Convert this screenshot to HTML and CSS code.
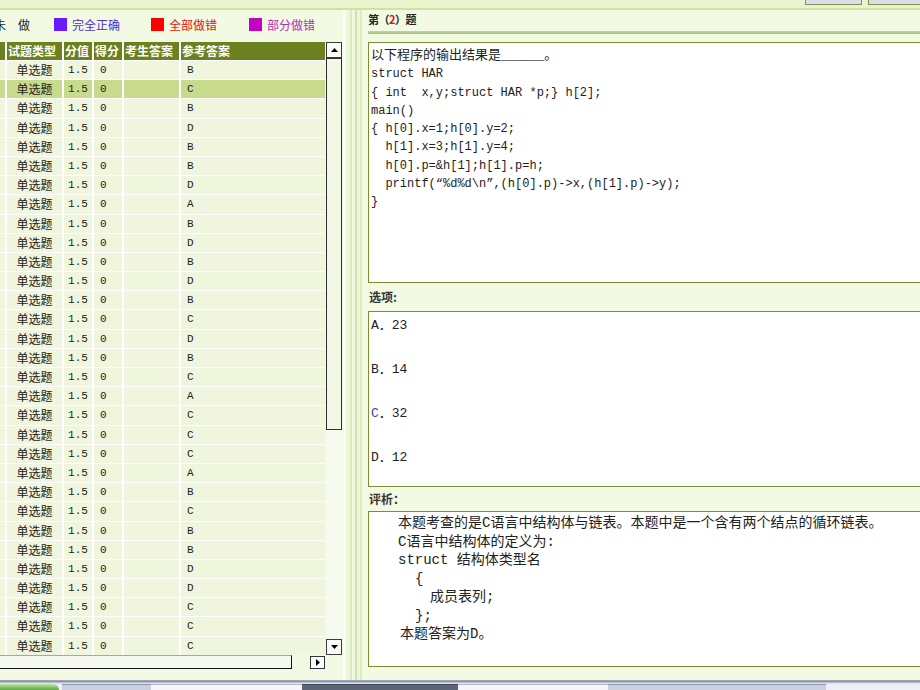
FILE: index.html
```html
<!DOCTYPE html>
<html lang="zh-CN">
<head>
<meta charset="utf-8">
<title>试题</title>
<link rel="stylesheet" href="styles.css">
</head>
<body>
<div class="top">
  <span class="tbtn tbtn-a"></span>
  <span class="tbtn tbtn-b"></span>
</div>
<div class="main">
  <section class="left">
    <div class="legend">
      <span class="undone">未做</span>
      <span class="li li-blue"><i class="sw"></i>完全正确</span>
      <span class="li li-red"><i class="sw"></i>全部做错</span>
      <span class="li li-purple"><i class="sw"></i>部分做错</span>
    </div>
    <div class="grid-wrap">
      <div class="table">
        <div class="row head"><span></span><span>试题类型</span><span>分值</span><span>得分</span><span>考生答案</span><span>参考答案</span></div>
        <div class="row"><span></span><span class="c-type">单选题</span><span class="c-num">1.5</span><span class="c-got">0</span><span></span><span class="c-ref">B</span></div>
        <div class="row sel"><span></span><span class="c-type">单选题</span><span class="c-num">1.5</span><span class="c-got">0</span><span></span><span class="c-ref">C</span></div>
        <div class="row"><span></span><span class="c-type">单选题</span><span class="c-num">1.5</span><span class="c-got">0</span><span></span><span class="c-ref">B</span></div>
        <div class="row"><span></span><span class="c-type">单选题</span><span class="c-num">1.5</span><span class="c-got">0</span><span></span><span class="c-ref">D</span></div>
        <div class="row"><span></span><span class="c-type">单选题</span><span class="c-num">1.5</span><span class="c-got">0</span><span></span><span class="c-ref">B</span></div>
        <div class="row"><span></span><span class="c-type">单选题</span><span class="c-num">1.5</span><span class="c-got">0</span><span></span><span class="c-ref">B</span></div>
        <div class="row"><span></span><span class="c-type">单选题</span><span class="c-num">1.5</span><span class="c-got">0</span><span></span><span class="c-ref">D</span></div>
        <div class="row"><span></span><span class="c-type">单选题</span><span class="c-num">1.5</span><span class="c-got">0</span><span></span><span class="c-ref">A</span></div>
        <div class="row"><span></span><span class="c-type">单选题</span><span class="c-num">1.5</span><span class="c-got">0</span><span></span><span class="c-ref">B</span></div>
        <div class="row"><span></span><span class="c-type">单选题</span><span class="c-num">1.5</span><span class="c-got">0</span><span></span><span class="c-ref">D</span></div>
        <div class="row"><span></span><span class="c-type">单选题</span><span class="c-num">1.5</span><span class="c-got">0</span><span></span><span class="c-ref">B</span></div>
        <div class="row"><span></span><span class="c-type">单选题</span><span class="c-num">1.5</span><span class="c-got">0</span><span></span><span class="c-ref">D</span></div>
        <div class="row"><span></span><span class="c-type">单选题</span><span class="c-num">1.5</span><span class="c-got">0</span><span></span><span class="c-ref">B</span></div>
        <div class="row"><span></span><span class="c-type">单选题</span><span class="c-num">1.5</span><span class="c-got">0</span><span></span><span class="c-ref">C</span></div>
        <div class="row"><span></span><span class="c-type">单选题</span><span class="c-num">1.5</span><span class="c-got">0</span><span></span><span class="c-ref">D</span></div>
        <div class="row"><span></span><span class="c-type">单选题</span><span class="c-num">1.5</span><span class="c-got">0</span><span></span><span class="c-ref">B</span></div>
        <div class="row"><span></span><span class="c-type">单选题</span><span class="c-num">1.5</span><span class="c-got">0</span><span></span><span class="c-ref">C</span></div>
        <div class="row"><span></span><span class="c-type">单选题</span><span class="c-num">1.5</span><span class="c-got">0</span><span></span><span class="c-ref">A</span></div>
        <div class="row"><span></span><span class="c-type">单选题</span><span class="c-num">1.5</span><span class="c-got">0</span><span></span><span class="c-ref">C</span></div>
        <div class="row"><span></span><span class="c-type">单选题</span><span class="c-num">1.5</span><span class="c-got">0</span><span></span><span class="c-ref">C</span></div>
        <div class="row"><span></span><span class="c-type">单选题</span><span class="c-num">1.5</span><span class="c-got">0</span><span></span><span class="c-ref">C</span></div>
        <div class="row"><span></span><span class="c-type">单选题</span><span class="c-num">1.5</span><span class="c-got">0</span><span></span><span class="c-ref">A</span></div>
        <div class="row"><span></span><span class="c-type">单选题</span><span class="c-num">1.5</span><span class="c-got">0</span><span></span><span class="c-ref">B</span></div>
        <div class="row"><span></span><span class="c-type">单选题</span><span class="c-num">1.5</span><span class="c-got">0</span><span></span><span class="c-ref">C</span></div>
        <div class="row"><span></span><span class="c-type">单选题</span><span class="c-num">1.5</span><span class="c-got">0</span><span></span><span class="c-ref">B</span></div>
        <div class="row"><span></span><span class="c-type">单选题</span><span class="c-num">1.5</span><span class="c-got">0</span><span></span><span class="c-ref">B</span></div>
        <div class="row"><span></span><span class="c-type">单选题</span><span class="c-num">1.5</span><span class="c-got">0</span><span></span><span class="c-ref">D</span></div>
        <div class="row"><span></span><span class="c-type">单选题</span><span class="c-num">1.5</span><span class="c-got">0</span><span></span><span class="c-ref">D</span></div>
        <div class="row"><span></span><span class="c-type">单选题</span><span class="c-num">1.5</span><span class="c-got">0</span><span></span><span class="c-ref">C</span></div>
        <div class="row"><span></span><span class="c-type">单选题</span><span class="c-num">1.5</span><span class="c-got">0</span><span></span><span class="c-ref">C</span></div>
        <div class="row"><span></span><span class="c-type">单选题</span><span class="c-num">1.5</span><span class="c-got">0</span><span></span><span class="c-ref">C</span></div>
      </div>
      <div class="vscroll">
        <div class="sbtn"><svg width="7" height="4" viewBox="0 0 7 4"><polygon points="0,4 3.5,0 7,4" fill="#000"/></svg></div>
        <div class="track"><div class="thumb"></div></div>
        <div class="sbtn"><svg width="7" height="4" viewBox="0 0 7 4"><polygon points="0,0 7,0 3.5,4" fill="#000"/></svg></div>
      </div>
    </div>
    <div class="hscroll">
      <div class="hbar"></div>
      <div class="hbtn"><svg width="4" height="7" viewBox="0 0 4 7"><polygon points="0,0 4,3.5 0,7" fill="#000"/></svg></div>
    </div>
  </section>
  <div class="divider"></div>
  <section class="right">
    <div class="qtitle">第（<span class="qnum">2</span>）题</div>
    <div class="rule"></div>
    <div class="box qbox"><div><span class="cn">以下程序的输出结果是</span>______<span class="cn">。</span></div><pre class="code">struct HAR
{ int  x,y;struct HAR *p;} h[2];
main()
{ h[0].x=1;h[0].y=2;
  h[1].x=3;h[1].y=4;
  h[0].p=&amp;h[1];h[1].p=h;
  printf(“%d%d\n”,(h[0].p)-&gt;x,(h[1].p)-&gt;y);
}</pre></div>
    <div class="lbl lbl-opt">选项:</div>
    <div class="box obox">
      <div class="opt">A．23</div>
      <div class="opt">B．14</div>
      <div class="opt"><span class="opt-blue">C</span>．32</div>
      <div class="opt">D．12</div>
    </div>
    <div class="lbl lbl-ana">评析：</div>
    <div class="box abox">
      <div>本题考查的是C语言中结构体与链表。本题中是一个含有两个结点的循环链表。</div>
      <div>C语言中结构体的定义为:</div>
      <div>struct 结构体类型名</div>
      <div class="ind1">{</div>
      <div class="ind2">成员表列;</div>
      <div class="ind1">};</div>
      <div class="ind0">本题答案为D。</div>
    </div>
  </section>
</div>
<div class="taskbar">
  <div class="tb-line"></div>
  <div class="tabs">
    <span class="tab tab-start"></span>
    <span class="tab tab-gray t2"></span>
    <span class="tab tab-white t3"></span>
    <span class="tab tab-dark t4"></span>
    <span class="tab tab-white t5"></span>
    <span class="tab tab-gray t6"></span>
    <span class="tab tab-light t7"></span>
  </div>
</div>
</body>
</html>
```
FILE: styles.css
```css
* { box-sizing: border-box; }
html, body { margin: 0; padding: 0; }
body {
  width: 920px;
  height: 690px;
  overflow: hidden;
  background: #f3fae3;
  font-family: "Noto Sans CJK SC", "Liberation Sans", sans-serif;
  font-size: 12px;
  color: #222;
}

/* top strip */
.top {
  height: 10px;
  background: #e9f4cc;
  border-bottom: 2px solid #d0e1a8;
  display: flex;
  justify-content: flex-end;
  align-items: flex-start;
  overflow: hidden;
}
.tbtn {
  height: 5px;
  background: #dcdde6;
  border: 1px solid #7f8f55;
  border-top: none;
}
.tbtn-a { width: 57px; margin-right: 6px; }
.tbtn-b { width: 62px; margin-right: -10px; }

.main {
  display: flex;
  height: 670px;
  overflow: hidden;
}

/* left panel */
.left {
  width: 343px;
  flex: none;
  display: flex;
  flex-direction: column;
}
.legend {
  height: 32px;
  padding-bottom: 4px;
  display: flex;
  align-items: center;
  white-space: nowrap;
}
.undone {
  margin-left: -6px;
  letter-spacing: 12px;
  color: #222;
}
.li { display: flex; align-items: center; }
.sw { display: block; width: 13px; height: 13px; margin-right: 5px; }
.li-blue { margin-left: 12px; color: #4a2fd8; }
.li-blue .sw { background: #6b1cff; }
.li-red { margin-left: 31px; color: #e81010; }
.li-red .sw { background: #ff0000; }
.li-purple { margin-left: 32px; color: #b52db5; }
.li-purple .sw { background: #c400c4; }

.grid-wrap {
  display: flex;
  height: 613px;
}
.table {
  width: 325px;
  flex: none;
  background: #ffffff;
  display: flex;
  flex-direction: column;
  gap: 1px;
  overflow: hidden;
}
.row {
  display: grid;
  grid-template-columns: 5px 55px 28px 28px 55px 1fr;
  column-gap: 2px;
  height: 18.2px;
  flex: none;
}
.row > span {
  background: #eff6dd;
  line-height: 18px;
  white-space: nowrap;
  overflow: hidden;
}
.row.head { height: 18px; }
.row.head > span {
  background: #6b801f;
  color: #fff;
  font-weight: bold;
  padding-left: 1px;
}
.row.sel > span { background: #c8db8d; }
.c-type { text-align: center; }
.c-num {
  text-align: center;
  font-family: "Liberation Mono", monospace;
  font-size: 11px;
}
.c-got, .c-ref {
  padding-left: 6px;
  font-family: "Liberation Mono", monospace;
  font-size: 11px;
}

.vscroll {
  width: 16px;
  margin-left: 1px;
  display: flex;
  flex-direction: column;
  background: #f7fbef;
}
.sbtn {
  height: 16px;
  flex: none;
  border: 1px solid #3a3a3a;
  background: #fafaf6;
  display: flex;
  align-items: center;
  justify-content: center;
}
.track { flex: 1; }
.thumb {
  height: 372px;
  border: 1px solid #2e2e2e;
  background: #f3f8e6;
}

.hscroll {
  display: flex;
  height: 14px;
}
.hbar {
  width: 292px;
  height: 14px;
  border-top: 1px solid #a8a8a0;
  border-right: 1px solid #111;
  border-bottom: 1px solid #111;
  background: #f6faee;
}
.hbtn {
  margin-left: 18px;
  margin-top: 1px;
  width: 15px;
  height: 13px;
  border: 1px solid #333;
  background: #fdfdfb;
  display: flex;
  align-items: center;
  justify-content: center;
}

/* divider */
.divider {
  width: 19px;
  flex: none;
  background: linear-gradient(90deg,
    #fbfdf4 0 3px, #eef7dc 3px 7px, #d8ebbb 7px 9px, #f1f8e2 9px 12px,
    #cfe5ac 12px 14px, #eef7dc 14px 17px, #dcedc4 17px 19px);
}

/* right panel */
.right {
  width: 600px;
  flex: none;
  padding-left: 6px;
  display: flex;
  flex-direction: column;
}
.qtitle {
  height: 18px;
  line-height: 18px;
  font-weight: bold;
  color: #222;
  font-size: 11px;
  letter-spacing: -0.5px;
}
.qnum { color: #e01010; }
.rule {
  height: 3px;
  margin: 3px 0 8px;
  background: linear-gradient(#c6d59c, #a9bc72);
}
.box {
  background: #fff;
  border: 1px solid #7b8f2f;
  flex: none;
}
.qbox {
  height: 241px;
  padding: 2px 0 0 2px;
  font-family: "Liberation Mono", "Noto Sans CJK SC", monospace;
  font-size: 12px;
  line-height: 18.25px;
  color: #222;
  white-space: pre;
}
.cn { font-family: "Noto Sans CJK SC", sans-serif; font-size: 13px; }
.code {
  margin: 0;
  font: inherit;
  line-height: 18.25px;
}
.lbl {
  font-weight: bold;
  color: #333;
  padding-left: 1px;
}
.lbl-opt { height: 28px; line-height: 28px; }
.lbl-ana { height: 24px; line-height: 24px; }
.obox {
  height: 176px;
  padding: 4px 0 0 2px;
}
.opt {
  height: 44px;
  line-height: 20px;
  font-family: "Liberation Mono", "Noto Sans CJK SC", monospace;
  font-size: 13px;
  color: #222;
}
.opt-blue { color: #3247c4; }
.abox {
  height: 156px;
  padding: 2px 0 0 29px;
  font-family: "Liberation Mono", "Noto Sans CJK SC", monospace;
  font-size: 14px;
  line-height: 18.5px;
  color: #222;
  white-space: nowrap;
}
.ind1 { padding-left: 17px; }
.ind2 { padding-left: 32px; }
.ind0 { padding-left: 2px; }

/* taskbar */
.taskbar {
  height: 10px;
  background: #eef0f5;
}
.tb-line {
  height: 4px;
  background: linear-gradient(#a4aabb, #8c94aa 40%, #c8ccd8 70%, #eef0f4);
}
.tabs {
  display: flex;
  height: 6px;
}
.tab { display: block; height: 6px; }
.tab-start {
  width: 59px;
  background: linear-gradient(#bfe4a9, #5aa83e);
  border-top-right-radius: 6px;
}
.t2 { width: 89px; margin-left: 3px; }
.t3 { width: 151px; }
.t4 { width: 156px; }
.t5 { width: 150px; }
.t6 { width: 218px; }
.t7 { flex: 1; }
.tab-gray { background: #cbd0e1; border-top: 1px solid #8f97ad; }
.tab-white { background: #f7f7fb; border-top: 1px solid #b5bacb; }
.tab-dark { background: #5c6476; border-top: 1px solid #3c4456; }
.tab-light { background: #eef0f6; }
```
